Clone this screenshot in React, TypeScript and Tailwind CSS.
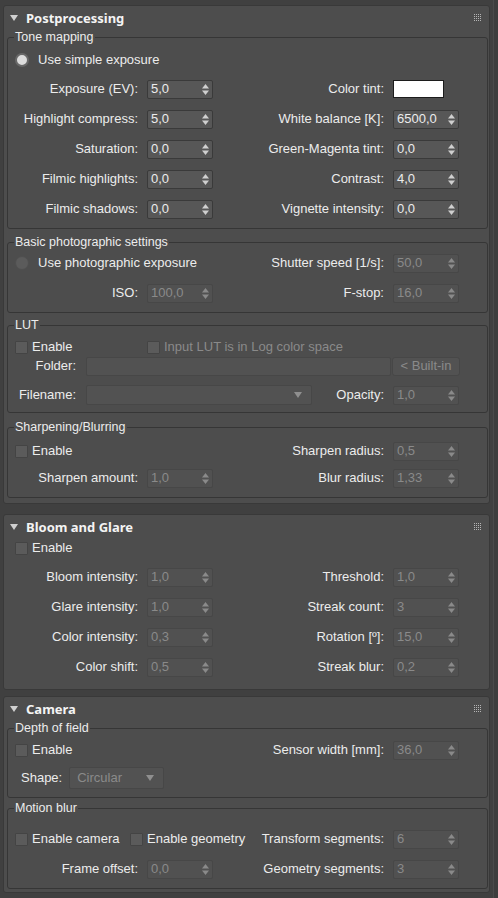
import { clsx } from "clsx";
import type { ReactNode } from "react";

// 3ds Max style render settings rollouts: dark grey panels, group boxes,
// spinners with stacked up/down arrows. Columns are fixed like the Qt form.

function Arrows({ disabled }: { disabled?: boolean }) {
  return (
    <svg width="7" height="11" viewBox="0 0 7 11" className="shrink-0" aria-hidden>
      <g fill={disabled ? "#8a8a8a" : "#cfcfcf"}>
        <polygon points="3.5,0 7,4.5 0,4.5" />
        <polygon points="0,6.5 7,6.5 3.5,11" />
      </g>
    </svg>
  );
}

function Spinner({ value, disabled }: { value: string; disabled?: boolean }) {
  return (
    <div
      className={clsx(
        "flex h-[19px] w-[66px] items-center justify-between rounded-[2px] border pl-[3px] pr-[3px]",
        disabled ? "border-[#474747] bg-[#515151] text-[#8a8a8a]" : "border-[#3a3a3a] bg-[#575757] text-[#ececec]"
      )}
    >
      <span>{value}</span>
      <Arrows disabled={disabled} />
    </div>
  );
}

function Checkbox({ label, disabled, className }: { label: string; disabled?: boolean; className?: string }) {
  return (
    <div className={clsx("flex shrink-0 items-center", className)}>
      <span className="size-[13px] shrink-0 rounded-[1px] border border-[#444] bg-[#5b5b5b]" />
      <span className={clsx("ml-[4px] whitespace-nowrap", disabled ? "text-[#8a8a8a]" : "text-[#ececec]")}>
        {label}
      </span>
    </div>
  );
}

function Radio({ label, checked }: { label: string; checked?: boolean }) {
  return (
    <div className="ml-[7px] flex items-center">
      <span
        className={clsx(
          "size-[14px] shrink-0 rounded-full",
          checked ? "border-[2px] border-[#686868] bg-[#dcdcdc]" : "border border-[#4f4f4f] bg-[#5b5b5b]"
        )}
      />
      <span className="ml-[9px] whitespace-nowrap text-[#ececec]">{label}</span>
    </div>
  );
}

function Dropdown({ value, className }: { value?: string; className: string }) {
  return (
    <div
      className={clsx(
        "flex items-center justify-between rounded-[2px] border border-[#474747] bg-[#525252] pl-[7px] pr-[9px] text-[#8a8a8a]",
        className
      )}
    >
      <span>{value}</span>
      <svg width="8" height="6" viewBox="0 0 8 6" aria-hidden>
        <polygon points="0,0 8,0 4,6" fill="#8f8f8f" />
      </svg>
    </div>
  );
}

// left half: label column ends at x=138, control at 147
function Left({ label, children }: { label: string; children: ReactNode }) {
  return (
    <>
      <span className="w-[130px] shrink-0 text-right whitespace-nowrap text-[#ececec]">{label}</span>
      <div className="ml-[9px]">{children}</div>
    </>
  );
}

function Right({ label, children }: { label: string; children: ReactNode }) {
  return (
    <>
      <span className="whitespace-nowrap text-[#ececec]">{label}</span>
      <div className="ml-[9px]">{children}</div>
    </>
  );
}

function Row({ className, left, right }: { className?: string; left?: ReactNode; right?: ReactNode }) {
  return (
    <div className={clsx("flex items-center", className)}>
      <div className="flex w-[205px] shrink-0 items-center">{left}</div>
      <div className="flex flex-1 items-center justify-end pr-[28px]">{right}</div>
    </div>
  );
}

function GridIcon() {
  const dots = [];
  for (let r = 0; r < 4; r++) for (let c = 0; c < 4; c++) dots.push(<rect key={`${r}-${c}`} x={c * 2} y={r * 2} width="1" height="1" />);
  return (
    <svg width="7" height="7" viewBox="0 0 7 7" className="ml-auto" aria-hidden>
      <g fill="#b5b5b5">{dots}</g>
    </svg>
  );
}

function Rollout({ title, className, children }: { title: string; className?: string; children: ReactNode }) {
  return (
    <section className={clsx("w-[487px] rounded-[3px] border border-[#393939] bg-[#4d4d4d]", className)}>
      <header className="flex h-[23px] items-center pl-[6px] pr-[8px]">
        <svg width="8" height="6" viewBox="0 0 8 6" aria-hidden>
          <polygon points="0,0 8,0 4,6" fill="#d0d0d0" />
        </svg>
        <span className="ml-[8px] font-['Noto_Sans',sans-serif] text-[13px] font-bold text-[#f4f4f4]">{title}</span>
        <GridIcon />
      </header>
      {children}
    </section>
  );
}

function Group({ title, className, children }: { title: string; className?: string; children: ReactNode }) {
  return (
    <fieldset className={clsx("ml-[3px] mr-[1px] min-w-0 rounded-[3px] border border-[#363636] p-0", className)}>
      <legend className="ml-[6px] px-[1px] text-[12.5px] leading-[14px] text-[#ececec]">{title}</legend>
      {children}
    </fieldset>
  );
}

export default function App() {
  return (
    <div className="flex h-[898px] w-[498px] overflow-hidden bg-[#404040] pl-[3px] font-['Liberation_Sans',Arial,sans-serif] text-[13px] leading-[16px]">
      <div className="shrink-0 pt-[5px]">
        <Rollout title="Postprocessing" className="pb-[5px]">
          <Group title="Tone mapping" className="mt-[1px] pb-[4px]">
            <div className="mt-[5px] flex h-[22px] items-center">
              <Radio label="Use simple exposure" checked />
            </div>
            <Row
              className="mt-[3px] h-[30px]"
              left={<Left label="Exposure (EV):"><Spinner value="5,0" /></Left>}
              right={
                <Right label="Color tint:">
                  <div className="w-[66px]">
                    <div className="h-[18px] w-[51px] border border-[#1c1c1c] bg-white" />
                  </div>
                </Right>
              }
            />
            <Row
              className="h-[30px]"
              left={<Left label="Highlight compress:"><Spinner value="5,0" /></Left>}
              right={<Right label="White balance [K]:"><Spinner value="6500,0" /></Right>}
            />
            <Row
              className="h-[30px]"
              left={<Left label="Saturation:"><Spinner value="0,0" /></Left>}
              right={<Right label="Green-Magenta tint:"><Spinner value="0,0" /></Right>}
            />
            <Row
              className="h-[30px]"
              left={<Left label="Filmic highlights:"><Spinner value="0,0" /></Left>}
              right={<Right label="Contrast:"><Spinner value="4,0" /></Right>}
            />
            <Row
              className="h-[30px]"
              left={<Left label="Filmic shadows:"><Spinner value="0,0" /></Left>}
              right={<Right label="Vignette intensity:"><Spinner value="0,0" /></Right>}
            />
          </Group>

          <Group title="Basic photographic settings" className="mt-[6px] pb-[4px]">
            <Row
              className="h-[28px]"
              left={<Radio label="Use photographic exposure" />}
              right={<Right label="Shutter speed [1/s]:"><Spinner value="50,0" disabled /></Right>}
            />
            <Row
              className="mt-[1px] h-[30px]"
              left={<Left label="ISO:"><Spinner value="100,0" disabled /></Left>}
              right={<Right label="F-stop:"><Spinner value="16,0" disabled /></Right>}
            />
          </Group>

          <Group title="LUT" className="mt-[5px] pb-[7px]">
            <div className="mt-[5px] flex h-[20px] items-center">
              <Checkbox label="Enable" className="ml-[7px] w-[132px]" />
              <Checkbox label="Input LUT is in Log color space" disabled />
            </div>
            <div className="-mt-[1px] flex h-[20px] items-center">
              <span className="w-[68px] shrink-0 text-right text-[#ececec]">Folder:</span>
              <div className="ml-[10px] h-[19px] w-[305px] rounded-[2px] border border-[#474747] bg-[#525252]" />
              <div className="ml-[1px] flex h-[19px] w-[68px] items-center justify-center rounded-[3px] border border-[#474747] bg-[#525252] text-[#8a8a8a]">
                &lt; Built-in
              </div>
            </div>
            <div className="mt-[9px] flex h-[20px] items-center pr-[28px]">
              <span className="w-[68px] shrink-0 text-right text-[#ececec]">Filename:</span>
              <Dropdown className="ml-[10px] h-[20px] w-[226px]" />
              <div className="flex flex-1 items-center justify-end">
                <Right label="Opacity:"><Spinner value="1,0" disabled /></Right>
              </div>
            </div>
          </Group>

          <Group title="Sharpening/Blurring" className="mt-[7px] pb-[4px]">
            <Row
              className="mt-[6px] h-[22px]"
              left={<Checkbox label="Enable" className="ml-[7px]" />}
              right={<Right label="Sharpen radius:"><Spinner value="0,5" disabled /></Right>}
            />
            <Row
              className="mt-[1px] h-[30px]"
              left={<Left label="Sharpen amount:"><Spinner value="1,0" disabled /></Left>}
              right={<Right label="Blur radius:"><Spinner value="1,33" disabled /></Right>}
            />
          </Group>
        </Rollout>

        <Rollout title="Bloom and Glare" className="mt-[10px] pb-[7px]">
          <div className="pl-[4px] pr-[2px]">
            <div className="flex h-[20px] items-center">
              <Checkbox label="Enable" className="ml-[7px]" />
            </div>
            <Row
              className="mt-[4px] h-[30px]"
              left={<Left label="Bloom intensity:"><Spinner value="1,0" disabled /></Left>}
              right={<Right label="Threshold:"><Spinner value="1,0" disabled /></Right>}
            />
            <Row
              className="h-[30px]"
              left={<Left label="Glare intensity:"><Spinner value="1,0" disabled /></Left>}
              right={<Right label="Streak count:"><Spinner value="3" disabled /></Right>}
            />
            <Row
              className="h-[30px]"
              left={<Left label="Color intensity:"><Spinner value="0,3" disabled /></Left>}
              right={<Right label="Rotation [º]:"><Spinner value="15,0" disabled /></Right>}
            />
            <Row
              className="h-[30px]"
              left={<Left label="Color shift:"><Spinner value="0,5" disabled /></Left>}
              right={<Right label="Streak blur:"><Spinner value="0,2" disabled /></Right>}
            />
          </div>
        </Rollout>

        <Rollout title="Camera" className="mt-[6px] pb-[3px]">
          <Group title="Depth of field" className="mt-[1px] pb-[2px]">
            <Row
              className="mt-[4px] h-[22px]"
              left={<Checkbox label="Enable" className="ml-[7px]" />}
              right={<Right label="Sensor width [mm]:"><Spinner value="36,0" disabled /></Right>}
            />
            <div className="flex h-[34px] items-center">
              <span className="ml-[13px] text-[#ececec]">Shape:</span>
              <Dropdown value="Circular" className="ml-[7px] h-[22px] w-[95px]" />
            </div>
          </Group>

          <Group title="Motion blur" className="mt-[3px] pb-[4px]">
            <Row
              className="mt-[9px] h-[30px]"
              left={
                <>
                  <Checkbox label="Enable camera" className="ml-[7px] w-[115px]" />
                  <Checkbox label="Enable geometry" />
                </>
              }
              right={<Right label="Transform segments:"><Spinner value="6" disabled /></Right>}
            />
            <Row
              className="h-[30px]"
              left={<Left label="Frame offset:"><Spinner value="0,0" disabled /></Left>}
              right={<Right label="Geometry segments:"><Spinner value="3" disabled /></Right>}
            />
          </Group>
        </Rollout>
      </div>
      {/* scrollbar track edge */}
      <div className="ml-[3px] w-[5px] border-l border-[#4a4a4a] bg-[#3d3d3d]" />
    </div>
  );
}
